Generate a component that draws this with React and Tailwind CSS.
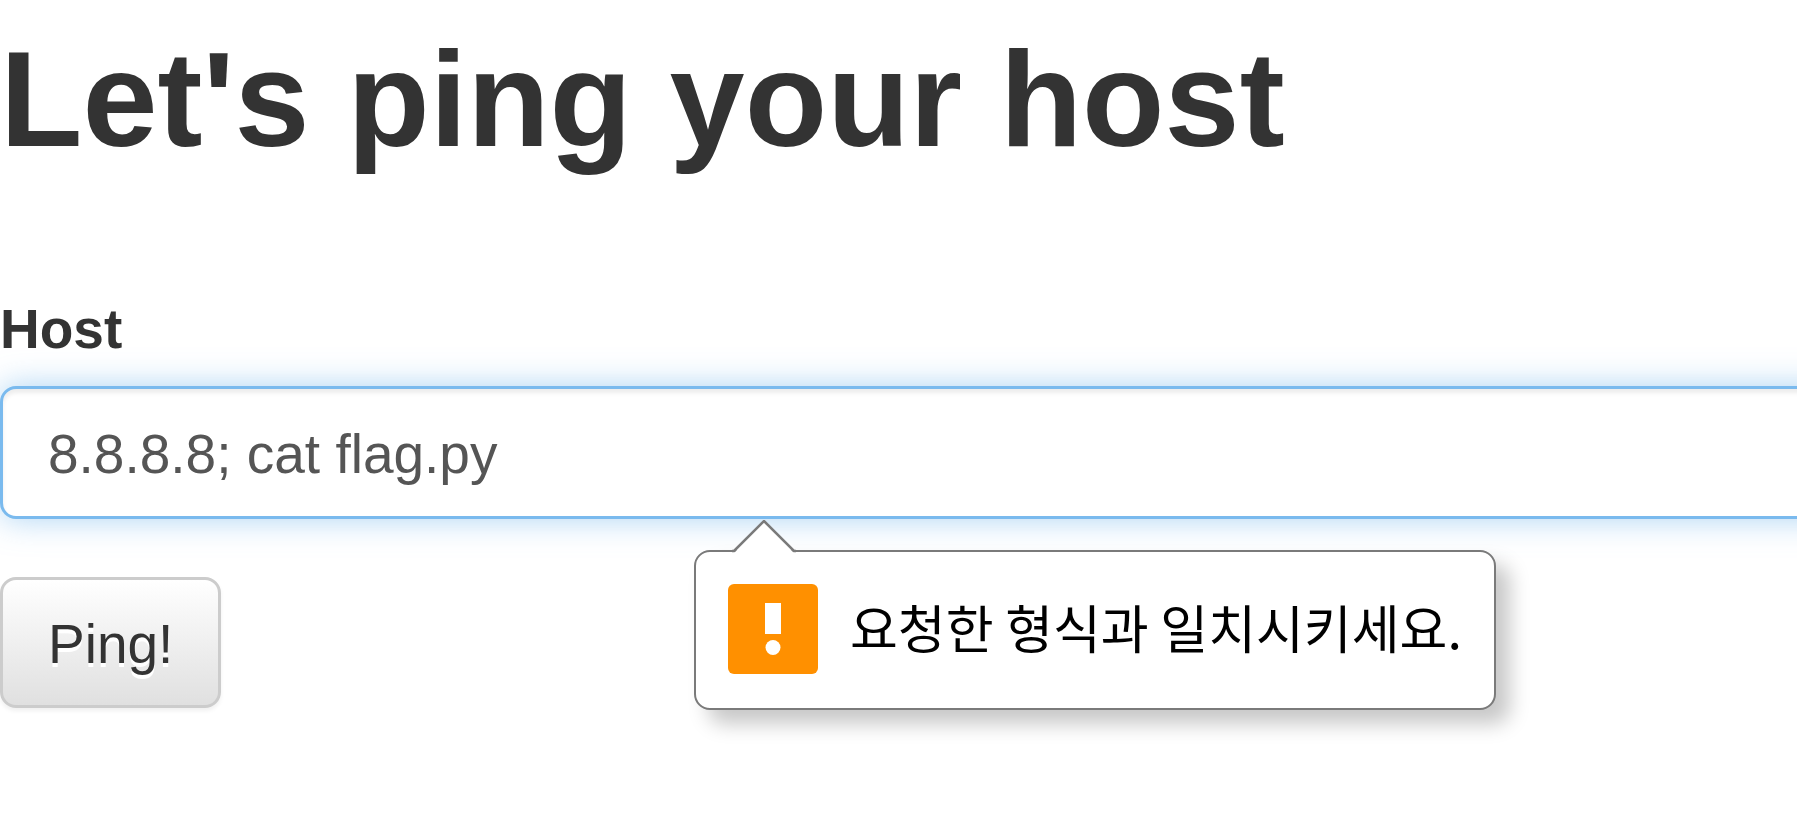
import React, { useState } from "react"

const WarningIcon = () => (
  <svg viewBox="0 0 90 90" className="size-[90px] shrink-0" aria-hidden="true">
    <rect width="90" height="90" rx="6" fill="#ff9000" />
    <rect x="37" y="19" width="16" height="31" fill="#fff" />
    <circle cx="45" cy="63.5" r="7.5" fill="#fff" />
  </svg>
)

const ValidationBubble = ({ message }) => (
  <div
    role="alert"
    className="absolute top-full left-[694px] mt-[31px] flex items-center gap-8 rounded-2xl border-2 border-[#7a7a7a] bg-white pt-8 pr-8 pb-[34px] pl-8 shadow-[14px_14px_20px_rgba(0,0,0,0.22)]"
  >
    <svg viewBox="0 0 64 34" className="absolute -top-[32px] left-[36px] h-[34px] w-[64px]" aria-hidden="true">
      <path d="M1 34 L32 2 L63 34 Z" fill="#fff" />
      <path d="M0 31 H2 L32 1 L62 31 H64" fill="none" stroke="#7a7a7a" strokeWidth="2.5" />
    </svg>
    <WarningIcon />
    <span className="pb-1 font-['Noto_Sans_CJK_KR',sans-serif] text-[52px] leading-[80px] whitespace-nowrap text-black">
      {message}
    </span>
  </div>
)

const App = () => {
  const [host, setHost] = useState("8.8.8.8; cat flag.py")

  return (
    <main className="mr-[3px] min-h-screen overflow-x-clip bg-white pt-5 font-['Liberation_Sans',Arial,sans-serif] text-[55px] leading-[80px] text-[#333333]">
      <h1 className="text-[135px] leading-[160px] font-bold whitespace-nowrap">
        Let's ping your host
      </h1>

      <form className="mt-[109px]" onSubmit={(e) => e.preventDefault()}>
        <label htmlFor="host" className="mb-[17px] block font-bold">
          Host
        </label>
        <div className="relative">
          <input
            id="host"
            type="text"
            className="block h-[133px] w-[calc(100%+48px)] rounded-2xl border-3 border-[#7abaee] bg-white px-[45px] pt-[2px] text-[#555555] shadow-[inset_0_4px_4px_rgba(0,0,0,0.075),0_0_32px_rgba(102,175,233,0.55)] outline-none"
            value={host}
            onChange={(e) => setHost(e.target.value)}
          />
          <ValidationBubble message="요청한 형식과 일치시키세요." />
        </div>

        <button
          type="submit"
          className="mt-[58px] block h-[131px] rounded-2xl border-3 border-[#cccccc] bg-linear-to-b from-white to-[#e0e0e0] px-[45px] pt-[2px] shadow-[0_3px_4px_rgba(0,0,0,0.06)] [text-shadow:0_4px_0_#ffffff]"
        >
          Ping!
        </button>
      </form>
    </main>
  )
}

export default App
